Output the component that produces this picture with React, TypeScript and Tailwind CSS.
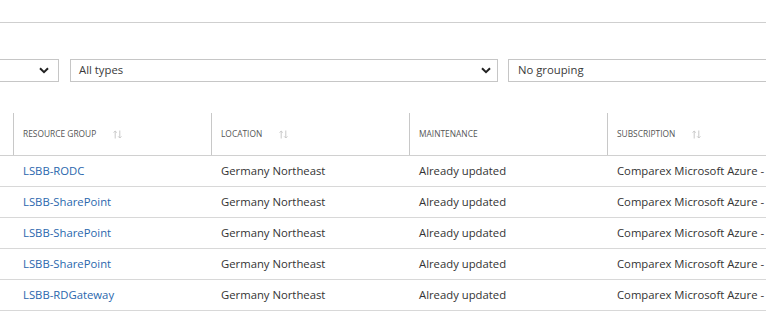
import React from 'react';

type Row = {
  group: string;
  location: string;
  maintenance: string;
  subscription: string;
};

const rows: Row[] = [
  { group: 'LSBB-RODC', location: 'Germany Northeast', maintenance: 'Already updated', subscription: 'Comparex Microsoft Azure -' },
  { group: 'LSBB-SharePoint', location: 'Germany Northeast', maintenance: 'Already updated', subscription: 'Comparex Microsoft Azure -' },
  { group: 'LSBB-SharePoint', location: 'Germany Northeast', maintenance: 'Already updated', subscription: 'Comparex Microsoft Azure -' },
  { group: 'LSBB-SharePoint', location: 'Germany Northeast', maintenance: 'Already updated', subscription: 'Comparex Microsoft Azure -' },
  { group: 'LSBB-RDGateway', location: 'Germany Northeast', maintenance: 'Already updated', subscription: 'Comparex Microsoft Azure -' },
];

const Chevron = () => (
  <svg width="10" height="7" viewBox="0 0 10 7" className="shrink-0">
    <path d="M1 1.2 L5 5.2 L9 1.2" fill="none" stroke="#222" strokeWidth="2" />
  </svg>
);

const SortIcon = () => (
  <svg width="9" height="9" viewBox="0 0 9 9" className="ml-[17px] shrink-0">
    <path d="M2.2 8.5 V1 M0.6 2.6 L2.2 1 L3.8 2.6" fill="none" stroke="#c8c8c8" strokeWidth="1" />
    <path d="M6.8 0.5 V8 M5.2 6.4 L6.8 8 L8.4 6.4" fill="none" stroke="#c8c8c8" strokeWidth="1" />
  </svg>
);

const HeaderCell = ({ label, sortable, width }: { label: string; sortable?: boolean; width: string }) => (
  <div className={`${width} h-[42px] shrink-0 border-l border-[#c8c8c8] flex items-center pl-[9px] pt-[1px]`}>
    <span className="text-[8.4px] text-[#555] uppercase whitespace-nowrap">{label}</span>
    {sortable && <SortIcon />}
  </div>
);

export default function App() {
  return (
    <div
      className="w-[766px] h-[317px] bg-white overflow-hidden text-[#333]"
      style={{ fontFamily: '"Open Sans", "Noto Sans", sans-serif' }}
    >
      <div className="h-[23px] border-b border-[#cfcfcf]" />

      {/* filters */}
      <div className="flex gap-[10px] mt-[36px] h-[23px] text-[11.3px]">
        <div className="w-[59px] shrink-0 border border-l-0 border-[#c6c6c6] flex items-center justify-end pr-[9px]">
          <Chevron />
        </div>
        <div className="w-[428px] shrink-0 ml-[1px] border border-[#c6c6c6] flex items-center justify-between pl-[8px] pr-[6px]">
          <span className="text-[#3a3a3a]">All types</span>
          <Chevron />
        </div>
        <div className="flex-1 border border-r-0 border-[#c6c6c6] flex items-center pl-[9px]">
          <span className="text-[#3a3a3a]">No grouping</span>
        </div>
      </div>

      {/* table */}
      <div className="mt-[31px]">
        <div className="flex border-b border-[#d0d0d0]">
          <div className="w-[13px] shrink-0" />
          <HeaderCell label="Resource group" sortable width="w-[198px]" />
          <HeaderCell label="Location" sortable width="w-[198px]" />
          <HeaderCell label="Maintenance" width="w-[198px]" />
          <HeaderCell label="Subscription" sortable width="w-[158px]" />
        </div>
        {rows.map((r, i) => (
          <div key={i} className="flex h-[31px] border-b border-[#d8d8d8] text-[11.3px] items-center whitespace-nowrap">
            <div className="w-[13px] shrink-0" />
            <div className="w-[198px] shrink-0 pl-[10px] text-[#2a67ad]">{r.group}</div>
            <div className="w-[198px] shrink-0 pl-[10px]">{r.location}</div>
            <div className="w-[198px] shrink-0 pl-[10px]">{r.maintenance}</div>
            <div className="w-[158px] shrink-0 pl-[10px]">{r.subscription}</div>
          </div>
        ))}
      </div>
    </div>
  );
}
